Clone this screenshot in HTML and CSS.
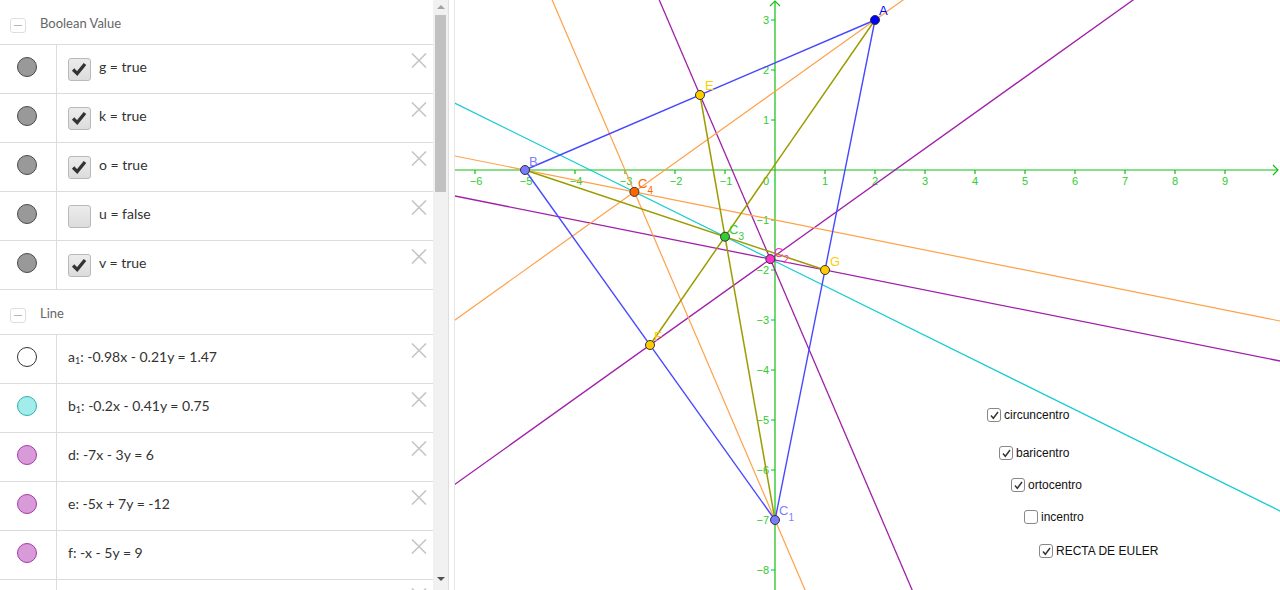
FILE: index.html
```html
<!DOCTYPE html>
<html>
<head>
<meta charset="utf-8">
<link rel="stylesheet" href="styles.css">
</head>
<body>
<div class="app">
  <div class="algebra">
    <div class="av-list">
      <div class="av-header"><span class="collapse"><span class="minus"></span></span><span class="hdr-text">Boolean Value</span></div>

      <div class="av-row">
        <div class="marble"><span class="dot dot-grey"></span></div>
        <div class="av-content"><span class="cb"><svg viewBox="0 0 23 23" width="21" height="21"><path d="M4.5 11.5 L9 16 L17.5 5.5" fill="none" stroke="#333" stroke-width="3.6"/></svg></span><span class="expr">g = true</span></div>
        <svg class="del" viewBox="0 0 16 15" width="16" height="15"><path d="M1 0.5 L15 14.5 M15 0.5 L1 14.5" stroke="#c6c6c6" stroke-width="1.6"/></svg>
      </div>
      <div class="av-row">
        <div class="marble"><span class="dot dot-grey"></span></div>
        <div class="av-content"><span class="cb"><svg viewBox="0 0 23 23" width="21" height="21"><path d="M4.5 11.5 L9 16 L17.5 5.5" fill="none" stroke="#333" stroke-width="3.6"/></svg></span><span class="expr">k = true</span></div>
        <svg class="del" viewBox="0 0 16 15" width="16" height="15"><path d="M1 0.5 L15 14.5 M15 0.5 L1 14.5" stroke="#c6c6c6" stroke-width="1.6"/></svg>
      </div>
      <div class="av-row">
        <div class="marble"><span class="dot dot-grey"></span></div>
        <div class="av-content"><span class="cb"><svg viewBox="0 0 23 23" width="21" height="21"><path d="M4.5 11.5 L9 16 L17.5 5.5" fill="none" stroke="#333" stroke-width="3.6"/></svg></span><span class="expr">o = true</span></div>
        <svg class="del" viewBox="0 0 16 15" width="16" height="15"><path d="M1 0.5 L15 14.5 M15 0.5 L1 14.5" stroke="#c6c6c6" stroke-width="1.6"/></svg>
      </div>
      <div class="av-row">
        <div class="marble"><span class="dot dot-grey"></span></div>
        <div class="av-content"><span class="cb"></span><span class="expr">u = false</span></div>
        <svg class="del" viewBox="0 0 16 15" width="16" height="15"><path d="M1 0.5 L15 14.5 M15 0.5 L1 14.5" stroke="#c6c6c6" stroke-width="1.6"/></svg>
      </div>
      <div class="av-row">
        <div class="marble"><span class="dot dot-grey"></span></div>
        <div class="av-content"><span class="cb"><svg viewBox="0 0 23 23" width="21" height="21"><path d="M4.5 11.5 L9 16 L17.5 5.5" fill="none" stroke="#333" stroke-width="3.6"/></svg></span><span class="expr">v = true</span></div>
        <svg class="del" viewBox="0 0 16 15" width="16" height="15"><path d="M1 0.5 L15 14.5 M15 0.5 L1 14.5" stroke="#c6c6c6" stroke-width="1.6"/></svg>
      </div>

      <div class="av-header"><span class="collapse"><span class="minus"></span></span><span class="hdr-text">Line</span></div>

      <div class="av-row">
        <div class="marble"><span class="dot dot-white"></span></div>
        <div class="av-content"><span class="expr">a<sub>1</sub>: -0.98x - 0.21y = 1.47</span></div>
        <svg class="del" viewBox="0 0 16 15" width="16" height="15"><path d="M1 0.5 L15 14.5 M15 0.5 L1 14.5" stroke="#c6c6c6" stroke-width="1.6"/></svg>
      </div>
      <div class="av-row">
        <div class="marble"><span class="dot dot-cyan"></span></div>
        <div class="av-content"><span class="expr">b<sub>1</sub>: -0.2x - 0.41y = 0.75</span></div>
        <svg class="del" viewBox="0 0 16 15" width="16" height="15"><path d="M1 0.5 L15 14.5 M15 0.5 L1 14.5" stroke="#c6c6c6" stroke-width="1.6"/></svg>
      </div>
      <div class="av-row">
        <div class="marble"><span class="dot dot-purple"></span></div>
        <div class="av-content"><span class="expr">d: -7x - 3y = 6</span></div>
        <svg class="del" viewBox="0 0 16 15" width="16" height="15"><path d="M1 0.5 L15 14.5 M15 0.5 L1 14.5" stroke="#c6c6c6" stroke-width="1.6"/></svg>
      </div>
      <div class="av-row">
        <div class="marble"><span class="dot dot-purple"></span></div>
        <div class="av-content"><span class="expr">e: -5x + 7y = -12</span></div>
        <svg class="del" viewBox="0 0 16 15" width="16" height="15"><path d="M1 0.5 L15 14.5 M15 0.5 L1 14.5" stroke="#c6c6c6" stroke-width="1.6"/></svg>
      </div>
      <div class="av-row">
        <div class="marble"><span class="dot dot-purple"></span></div>
        <div class="av-content"><span class="expr">f: -x - 5y = 9</span></div>
        <svg class="del" viewBox="0 0 16 15" width="16" height="15"><path d="M1 0.5 L15 14.5 M15 0.5 L1 14.5" stroke="#c6c6c6" stroke-width="1.6"/></svg>
      </div>
      <div class="av-row">
        <div class="marble"></div>
        <div class="av-content"></div>
        <svg class="del" viewBox="0 0 16 15" width="16" height="15"><path d="M1 0.5 L15 14.5 M15 0.5 L1 14.5" stroke="#c6c6c6" stroke-width="1.6"/></svg>
      </div>
    </div>
    <div class="scrollbar">
      <span class="sb-up"></span>
      <span class="sb-thumb"></span>
      <span class="sb-rest"></span>
      <span class="sb-down"></span>
    </div>
  </div>
  <div class="splitter"></div>
  <div class="graphics">
    <svg class="canvas" viewBox="455 0 825 590" width="825" height="590">
      <g class="axes" stroke="#10c010" stroke-width="1.2" fill="none">
        <line x1="455" y1="170" x2="1278" y2="170"/>
        <polyline points="1273,165 1278,170 1273,175"/>
        <line x1="775" y1="590" x2="775" y2="1"/>
        <polyline points="770,6 775,1 780,6"/>
        <path d="M475 170v4M525 170v4M575 170v4M625 170v4M675 170v4M725 170v4M825 170v4M875 170v4M925 170v4M975 170v4M1025 170v4M1075 170v4M1125 170v4M1175 170v4M1225 170v4"/>
        <path d="M771 20h4M771 70h4M771 120h4M771 220h4M771 270h4M771 320h4M771 370h4M771 420h4M771 470h4M771 520h4M771 570h4"/>
      </g>
      <g class="ticklabels" fill="#2ecc2e" font-family="Liberation Sans, Arial, sans-serif" font-size="11" text-anchor="middle">
        <text x="476" y="185">−6</text>
        <text x="526" y="185">−5</text>
        <text x="576" y="185">−4</text>
        <text x="626" y="185">−3</text>
        <text x="676" y="185">−2</text>
        <text x="726" y="185">−1</text>
        <text x="766" y="185">0</text>
        <text x="825" y="185">1</text>
        <text x="875" y="185">2</text>
        <text x="925" y="185">3</text>
        <text x="975" y="185">4</text>
        <text x="1025" y="185">5</text>
        <text x="1075" y="185">6</text>
        <text x="1125" y="185">7</text>
        <text x="1175" y="185">8</text>
        <text x="1225" y="185">9</text>
      </g>
      <g class="ticklabels" fill="#2ecc2e" font-family="Liberation Sans, Arial, sans-serif" font-size="11" text-anchor="end">
        <text x="769" y="24">3</text>
        <text x="769" y="74">2</text>
        <text x="769" y="124">1</text>
        <text x="769" y="224">−1</text>
        <text x="769" y="274">−2</text>
        <text x="769" y="324">−3</text>
        <text x="769" y="374">−4</text>
        <text x="769" y="424">−5</text>
        <text x="769" y="474">−6</text>
        <text x="769" y="524">−7</text>
        <text x="769" y="574">−8</text>
      </g>
      <g fill="none">
        <line x1="425" y1="88.4" x2="1325" y2="533.2" stroke="#14cdd2" stroke-width="1.2"/>
        <g stroke="#a020a8" stroke-width="1.3">
          <line x1="646.4" y1="-30" x2="925" y2="620"/>
          <line x1="425" y1="505.7" x2="1325" y2="-137.1"/>
          <line x1="425" y1="190" x2="1325" y2="370"/>
        </g>
        <g stroke="#ffa048" stroke-width="1.2">
          <line x1="425" y1="341.4" x2="975" y2="-51.4"/>
          <line x1="425" y1="150" x2="1325" y2="330"/>
          <line x1="539.3" y1="-30" x2="817.9" y2="620"/>
        </g>
        <g stroke="#4848ff" stroke-width="1.4">
          <line x1="525" y1="170" x2="875" y2="20"/>
          <line x1="525" y1="170" x2="775" y2="520"/>
          <line x1="875" y1="20" x2="775" y2="520"/>
        </g>
        <g stroke="#9c9c00" stroke-width="1.5">
          <line x1="875" y1="20" x2="650" y2="345"/>
          <line x1="525" y1="170" x2="825" y2="270"/>
          <line x1="775" y1="520" x2="700" y2="95"/>
        </g>
      </g>
      <g stroke="#333" stroke-width="1">
        <circle cx="875" cy="20" r="4.5" fill="#0000ff"/>
        <circle cx="525" cy="170" r="4.5" fill="#7b7bff"/>
        <circle cx="775" cy="520" r="4.5" fill="#7b7bff"/>
        <circle cx="700" cy="95" r="4.5" fill="#ffcc00"/>
        <circle cx="650" cy="345" r="4.5" fill="#ffcc00"/>
        <circle cx="825" cy="270" r="4.5" fill="#ffcc00"/>
        <circle cx="634.4" cy="191.9" r="4.5" fill="#ff6600"/>
        <circle cx="725" cy="236.7" r="4.5" fill="#33cc33"/>
        <circle cx="770.3" cy="259.1" r="4.5" fill="#ff33cc"/>
      </g>
      <g font-family="Liberation Sans, Arial, sans-serif" font-size="13">
        <text x="879" y="15" fill="#0000ff">A</text>
        <text x="529" y="166" fill="#8080ff">B</text>
        <text x="705" y="90" fill="#ffcc00">E</text>
        <text x="654" y="341" fill="#ffcc00">F</text>
        <text x="830" y="266" fill="#ffcc00">G</text>
        <text x="638" y="188" fill="#ff6600">C<tspan font-size="10" dy="6">4</tspan></text>
        <text x="729" y="234" fill="#33cc33">C<tspan font-size="10" dy="6">3</tspan></text>
        <text x="774" y="257" fill="#ff33cc">C<tspan font-size="10" dy="6">2</tspan></text>
        <text x="779" y="515" fill="#8080ff">C<tspan font-size="10" dy="6">1</tspan></text>
      </g>
    </svg>
    <label class="gcb cb-circ"><span class="gbox"><svg viewBox="0 0 14 14" width="11" height="11"><path d="M2.5 7 L5.5 10.5 L11.5 2.5" fill="none" stroke="#333" stroke-width="1.8"/></svg></span>circuncentro</label>
    <label class="gcb cb-bari"><span class="gbox"><svg viewBox="0 0 14 14" width="11" height="11"><path d="M2.5 7 L5.5 10.5 L11.5 2.5" fill="none" stroke="#333" stroke-width="1.8"/></svg></span>baricentro</label>
    <label class="gcb cb-orto"><span class="gbox"><svg viewBox="0 0 14 14" width="11" height="11"><path d="M2.5 7 L5.5 10.5 L11.5 2.5" fill="none" stroke="#333" stroke-width="1.8"/></svg></span>ortocentro</label>
    <label class="gcb cb-inc"><span class="gbox"></span>incentro</label>
    <label class="gcb cb-euler"><span class="gbox"><svg viewBox="0 0 14 14" width="11" height="11"><path d="M2.5 7 L5.5 10.5 L11.5 2.5" fill="none" stroke="#333" stroke-width="1.8"/></svg></span>RECTA DE EULER</label>
  </div>
</div>
</body>
</html>
```
FILE: styles.css
```css
html, body {
  margin: 0;
  padding: 0;
  background: #fff;
}
body {
  width: 1280px;
  height: 590px;
  overflow: hidden;
  font-family: Lato, "Noto Sans", sans-serif;
}
.app {
  display: flex;
  height: 590px;
}
.algebra {
  width: 448px;
  flex: none;
  display: flex;
  height: 590px;
  overflow: hidden;
}
.av-list {
  width: 433px;
  flex: none;
}
.av-header {
  height: 45px;
  box-sizing: border-box;
  border-bottom: 1px solid #dcdcdc;
  display: flex;
  align-items: flex-start;
  padding: 15px 0 0 10px;
}
.collapse {
  width: 16px;
  height: 15px;
  box-sizing: border-box;
  border: 1px solid #dedede;
  border-radius: 3px;
  margin: 3px 14px 0 0;
  display: flex;
  align-items: center;
  justify-content: center;
}
.minus {
  width: 8px;
  height: 1px;
  background: #b5b5b5;
}
.hdr-text {
  font-size: 13px;
  line-height: 16px;
  color: #666;
}
.av-row {
  height: 49px;
  box-sizing: border-box;
  border-bottom: 1px solid #dcdcdc;
  display: flex;
  align-items: flex-start;
}
.marble {
  width: 57px;
  height: 48px;
  flex: none;
  box-sizing: border-box;
  border-right: 1px solid #dcdcdc;
  padding: 12px 0 0 17px;
}
.dot {
  display: block;
  width: 20px;
  height: 20px;
  box-sizing: border-box;
  border-radius: 50%;
  border: 1px solid #444;
}
.dot-grey { background: #999; border-color: #4a4a4a; }
.dot-white { background: #fff; border-color: #333; }
.dot-cyan { background: #a3ecec; border-color: #2bb3b3; }
.dot-purple { background: #d99ad9; border-color: #a83aa8; }
.av-content {
  flex: 1;
  display: flex;
  align-items: flex-start;
  padding: 13px 0 0 11px;
}
.cb {
  width: 23px;
  height: 23px;
  flex: none;
  box-sizing: border-box;
  border: 1px solid #b9b9b9;
  border-radius: 3px;
  background: linear-gradient(#ececec, #dcdcdc);
  margin-right: 8px;
  display: flex;
  align-items: center;
  justify-content: center;
}
.cb svg { display: block; }
.expr {
  font-size: 14px;
  line-height: 20px;
  color: #333;
  margin-top: -1px;
  white-space: nowrap;
}
.expr sub {
  font-size: 9px;
  vertical-align: -2px;
  line-height: 0;
}
.del {
  flex: none;
  margin: 8px 6px 0 auto;
  display: block;
}
.scrollbar {
  width: 15px;
  flex: none;
  background: #f1f1f1;
  display: flex;
  flex-direction: column;
  align-items: center;
  height: 590px;
}
.sb-up {
  width: 0;
  height: 0;
  margin-top: 5px;
  border-left: 4px solid transparent;
  border-right: 4px solid transparent;
  border-bottom: 4px solid #a3a3a3;
}
.sb-thumb {
  width: 11px;
  height: 177px;
  margin-top: 6px;
  background: #c1c1c1;
}
.sb-rest {
  flex: 1;
}
.sb-down {
  width: 0;
  height: 0;
  margin-bottom: 9px;
  border-left: 4px solid transparent;
  border-right: 4px solid transparent;
  border-top: 4px solid #505050;
}
.splitter {
  width: 7px;
  flex: none;
  box-sizing: border-box;
  border-left: 1px solid #dedede;
  border-right: 1px solid #e6e6e6;
  background: #fff;
}
.graphics {
  flex: 1;
  position: relative;
  overflow: hidden;
  height: 590px;
}
.canvas {
  display: block;
}
.gcb {
  position: absolute;
  display: flex;
  align-items: center;
  gap: 3px;
  font-family: "Liberation Sans", Arial, sans-serif;
  font-size: 12px;
  color: #111;
  white-space: nowrap;
}
.gbox {
  width: 14px;
  height: 14px;
  box-sizing: border-box;
  border: 1.5px solid #888;
  border-radius: 3px;
  background: #fff;
  display: flex;
  align-items: center;
  justify-content: center;
}
.gbox svg { display: block; }
.cb-circ { left: 532px; top: 408px; }
.cb-bari { left: 544px; top: 446px; }
.cb-orto { left: 556px; top: 478px; }
.cb-inc { left: 569px; top: 510px; }
.cb-euler { left: 584px; top: 544px; }
```
